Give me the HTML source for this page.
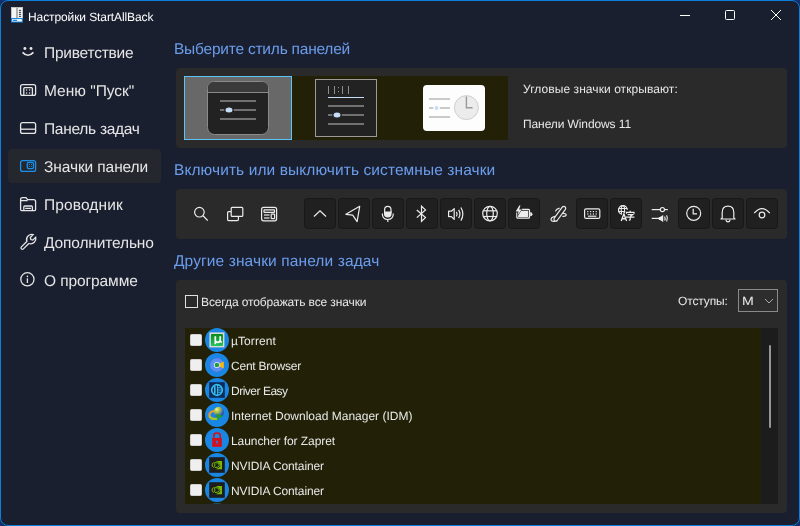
<!DOCTYPE html>
<html><head><meta charset="utf-8">
<style>
*{margin:0;padding:0;box-sizing:border-box}
html,body{width:800px;height:526px;overflow:hidden;background:#123070}
body{font-family:"Liberation Sans",sans-serif;position:relative}
.win{position:absolute;left:0;top:0;width:800px;height:526px;border-radius:8px;background:#1a1f30;overflow:hidden}
.frame{position:absolute;left:0;top:0;width:800px;height:526px;border:1px solid #0b80dd;border-radius:8px}
.t{position:absolute;white-space:nowrap;line-height:1;will-change:transform;text-rendering:geometricPrecision}
.side{color:#e6e6e6;font-size:15.5px}
.hdr{color:#6b9deb;font-size:15.5px}
.sm{color:#e8e8e8;font-size:12px}
.panel{position:absolute;left:176px;width:611px;background:#2a2a2a;border-radius:4px}
svg{position:absolute;overflow:visible}
.btn{position:absolute;top:198px;width:32px;height:31px;background:#202020;border:1px solid #181818;border-radius:3.5px}
</style></head><body>
<div class="win">
  <!-- title bar -->
  <svg style="left:0;top:0" width="800" height="40">
    <rect x="11" y="7.2" width="12" height="11" fill="#f6f6f6"/>
    <rect x="11.6" y="7" width="10.8" height="1" fill="#c4c4c4"/>
    <rect x="11" y="8" width="0.9" height="10" fill="#c0c0c0"/>
    <rect x="22.1" y="8" width="0.9" height="10" fill="#c0c0c0"/>
    <rect x="16.2" y="7.6" width="1.6" height="10.5" fill="#a0a0a0"/>
    <g fill="#505050"><rect x="18.9" y="9.8" width="2.2" height="1.1" rx="0.5"/><rect x="18.9" y="11.8" width="2.2" height="1.1" rx="0.5"/><rect x="18.9" y="13.8" width="2.2" height="1.1" rx="0.5"/><rect x="18.9" y="15.8" width="2.2" height="1.1" rx="0.5"/></g>
    <rect x="11" y="17.9" width="12" height="4.7" rx="0.6" fill="#1a86e0"/>
    <rect x="12.2" y="19.1" width="9.6" height="2.4" fill="#fff"/>
    <rect x="13" y="19.8" width="4.2" height="1.1" rx="0.5" fill="#1a86e0"/>
    <line x1="680" y1="15.5" x2="690" y2="15.5" stroke="#fff" stroke-width="1"/>
    <rect x="725.5" y="10.5" width="9" height="9" rx="1" fill="none" stroke="#fff" stroke-width="1"/>
    <path d="M771 10 L781 20 M781 10 L771 20" stroke="#fff" stroke-width="1"/>
  </svg>
  <div class="t" style="left:28px;top:11px;font-size:12px;color:#fff;letter-spacing:-0.1px">Настройки StartAllBack</div>

  <!-- sidebar -->
  <div style="position:absolute;left:8px;top:149px;width:153px;height:34px;background:#24272e;border-radius:4px"></div>
  <svg style="left:0;top:0" width="170" height="300" fill="none" stroke="#e6e6e6" stroke-width="1.3">
    <circle cx="24.9" cy="48.5" r="1.45" fill="#e6e6e6" stroke="none"/>
    <circle cx="31" cy="48.5" r="1.45" fill="#e6e6e6" stroke="none"/>
    <path d="M22.6 52.4 Q28 58.1 33.4 52.4" stroke-width="1.7"/>
    <rect x="20.6" y="84.6" width="15" height="10.8" rx="2"/>
    <path d="M23.8 95.4 V88.6 Q23.8 87.6 24.8 87.6 H31.4 Q32.4 87.6 32.4 88.6 V95.4"/>
    <g fill="#e6e6e6" stroke="none"><circle cx="26.6" cy="90" r="0.7"/><circle cx="29.6" cy="90" r="0.7"/><circle cx="26.6" cy="93" r="0.7"/><circle cx="29.6" cy="93" r="0.7"/></g>
    <rect x="20.6" y="122.6" width="15" height="10.8" rx="2"/>
    <line x1="20.6" y1="129.2" x2="35.6" y2="129.2"/>
    <g stroke="#1c90ea"><rect x="20.6" y="160.6" width="15" height="10.8" rx="2"/>
    <rect x="27.3" y="162.4" width="6.2" height="6.2" rx="1.3"/></g>
    <g fill="#1c90ea" stroke="none"><circle cx="29.4" cy="164.4" r="0.6"/><circle cx="31.5" cy="164.4" r="0.6"/><circle cx="29.4" cy="166.5" r="0.6"/><circle cx="31.5" cy="166.5" r="0.6"/></g>
    <path d="M20.6 209.6 V199.5 Q20.6 197.6 22.4 197.6 H26 L27.6 199.6 H33.6 Q35.6 199.6 35.6 201.6 V209.6 Q35.6 210.6 34.6 210.6 H21.6 Q20.6 210.6 20.6 209.6 Z"/>
    <line x1="20.6" y1="200.6" x2="27.6" y2="200.6"/>
    <path d="M23.8 210.6 V207 Q23.8 206 24.8 206 H31.4 Q32.4 206 32.4 207 V210.6"/>
    <line x1="25.2" y1="208.4" x2="31" y2="208.4"/>
    <path transform="translate(-0.2 0.7)" d="M21.6 246.2 L27 240.8 Q26 237.5 28.3 235.2 Q30.5 233.2 33.3 233.9 L30.5 236.8 L31 238.8 L33 239.4 L35.9 236.6 Q36.6 239.5 34.5 241.6 Q32.3 243.9 29 242.8 L23.6 248.2 Q22.6 249.2 21.6 248.2 Q20.6 247.2 21.6 246.2 Z"/>
    <circle cx="27.4" cy="279.3" r="6.6"/>
    <circle cx="27.4" cy="276.4" r="0.8" fill="#e6e6e6" stroke="none"/>
    <line x1="27.4" y1="278.3" x2="27.4" y2="283"/>
  </svg>
  <div class="t side" style="left:44px;top:46px;letter-spacing:-0.22px">Приветствие</div>
  <div class="t side" style="left:44px;top:84px;letter-spacing:-0.01px">Меню "Пуск"</div>
  <div class="t side" style="left:44px;top:122px;letter-spacing:-0.28px">Панель задач</div>
  <div class="t side" style="left:44px;top:160px;letter-spacing:-0.1px">Значки панели</div>
  <div class="t side" style="left:43.5px;top:198px;letter-spacing:0.12px">Проводник</div>
  <div class="t side" style="left:44px;top:236px;letter-spacing:-0.14px">Дополнительно</div>
  <div class="t side" style="left:44px;top:274px;letter-spacing:-0.1px">О программе</div>

  <!-- headers -->
  <div class="t hdr" style="left:174px;top:42px;letter-spacing:-0.22px">Выберите стиль панелей</div>
  <div class="t hdr" style="left:174px;top:163px;letter-spacing:0.09px">Включить или выключить системные значки</div>
  <div class="t hdr" style="left:174px;top:254px;letter-spacing:0.11px">Другие значки панели задач</div>

  <!-- panel 1 -->
  <div class="panel" style="top:68px;height:80px"></div>
  <div style="position:absolute;left:184px;top:76px;width:324px;height:64px;background:#222006"></div>
  <div style="position:absolute;left:184px;top:76px;width:108px;height:64px;background:#686868;border:1px solid #5ec4f5"></div>
  <svg style="left:0;top:0" width="800" height="160">
    <rect x="207.5" y="81.5" width="61" height="53" rx="7" fill="#222" stroke="#8a8a8a"/>
    <path d="M208 92.5 V88.5 Q208 82 214.5 82 H261.5 Q268 82 268 88.5 V92.5 Z" fill="#3a3a3a"/>
    <line x1="208" y1="92.5" x2="268" y2="92.5" stroke="#8a8a8a"/>
    <g stroke="#8c8c8c" stroke-width="1.6"><line x1="220" y1="101" x2="256" y2="101"/><line x1="220" y1="110" x2="256" y2="110"/><line x1="220" y1="119" x2="256" y2="119"/></g>
    <ellipse cx="229" cy="110" rx="4.2" ry="3.2" fill="#c7ddf7" stroke="#222" stroke-width="1.4"/>
    <rect x="315.5" y="79.5" width="61" height="57" fill="#222" stroke="#9a9a9a"/>
    <g stroke="#8c8c8c" stroke-width="1"><line x1="328.5" y1="86" x2="328.5" y2="94"/><line x1="334.5" y1="86" x2="334.5" y2="94"/><line x1="342.5" y1="86" x2="342.5" y2="94"/><line x1="348.5" y1="86" x2="348.5" y2="94"/></g>
    <g fill="#8c8c8c"><rect x="338" y="87" width="1" height="1.2"/><rect x="338" y="91" width="1" height="1.2"/></g>
    <line x1="328" y1="97.5" x2="364" y2="97.5" stroke="#c7ddf7" stroke-width="1.2"/>
    <g stroke="#8c8c8c" stroke-width="1.6"><line x1="328" y1="106" x2="364" y2="106"/><line x1="328" y1="115" x2="364" y2="115"/><line x1="328" y1="124" x2="364" y2="124"/></g>
    <ellipse cx="337" cy="115" rx="4.2" ry="3.2" fill="#c7ddf7" stroke="#222" stroke-width="1.4"/>
    <rect x="423" y="85" width="62" height="46" rx="4" fill="#fdfdfd"/>
    <g stroke="#bdbdbd" stroke-width="1.6"><line x1="429" y1="99" x2="450" y2="99"/><line x1="429" y1="108" x2="450" y2="108"/><line x1="429" y1="117" x2="450" y2="117"/></g>
    <circle cx="436.5" cy="108" r="2.6" fill="#c7ddf7" stroke="#fdfdfd" stroke-width="1.4"/>
    <circle cx="466.4" cy="107.6" r="12" fill="#ececec" stroke="#cfcfcf"/>
    <path d="M466.4 96.5 V107.8 H472.5" fill="none" stroke="#9a9a9a" stroke-width="1.4"/>
  </svg>
  <div class="t sm" style="left:523.0px;top:83px;letter-spacing:0.07px">Угловые значки открывают:</div>
  <div class="t sm" style="left:523px;top:118px;letter-spacing:-0.10px">Панели Windows 11</div>

  <!-- panel 2 -->
  <div class="panel" style="top:189px;height:50px"></div>
  <div class="btn" style="left:304px"></div>
  <div class="btn" style="left:338px"></div>
  <div class="btn" style="left:372px"></div>
  <div class="btn" style="left:406px"></div>
  <div class="btn" style="left:440px"></div>
  <div class="btn" style="left:474px"></div>
  <div class="btn" style="left:508px"></div>
  <div class="btn" style="left:576px"></div>
  <div class="btn" style="left:610px"></div>
  <div class="btn" style="left:678px"></div>
  <div class="btn" style="left:712px"></div>
  <div class="btn" style="left:746px"></div>
  <svg style="left:0;top:0" width="800" height="240" fill="none" stroke="#ececec" stroke-width="1.2">
    <circle cx="199.4" cy="212.2" r="4.8"/>
    <line x1="203" y1="215.8" x2="207.8" y2="220.6" stroke-width="1.3"/>
    <path d="M231.2 211.6 H228.6 Q227.6 211.6 227.6 212.6 V219.6 Q227.6 220.6 228.6 220.6 H237.4 Q238.4 220.6 238.4 219.6 V216.4"/>
    <rect x="231.2" y="207.4" width="11.6" height="9" rx="1"/>
    <rect x="261.6" y="207.4" width="15" height="13.4" rx="2"/>
    <rect x="264" y="209.8" width="10.5" height="2.6" rx="0.5"/>
    <line x1="264" y1="215" x2="269.5" y2="215"/><line x1="264" y1="218" x2="269.5" y2="218"/>
    <rect x="271.2" y="214.2" width="3.4" height="4.4" rx="0.5"/>
    <path d="M314 216.5 L320 210.8 L326 216.5"/>
    <path d="M359.7 206.3 L345.9 214.3 L352.7 215.2 L357.1 221.6 Z" stroke-linejoin="round"/>
    <path d="M384.6 213 V209.5 Q384.6 206.3 387.8 206.3 Q391 206.3 391 209.5 V213" />
    <path d="M384.6 212 H391 V213.8 Q391 217 387.8 217 Q384.6 217 384.6 213.8 Z" fill="#ececec"/>
    <path d="M382.3 213.5 Q382.3 219.5 387.8 219.5 Q393.3 219.5 393.3 213.5"/>
    <line x1="387.8" y1="219.5" x2="387.8" y2="222"/>
    <path d="M416.8 210 L425.5 217.6 L421.5 221.3 V206.2 L425.5 209.9 L416.8 217.6"/>
    <path d="M448.6 211.2 H451.4 L454.2 208.6 V219.4 L451.4 216.6 H448.6 Z" stroke-linejoin="round"/>
    <path d="M456.4 211.8 Q457.9 214 456.4 216.4"/>
    <path d="M458.6 209.9 Q461.3 214 458.6 218.1"/>
    <path d="M460.9 207.5 Q464.8 214 460.9 220.6"/>
    <circle cx="490" cy="213.6" r="7.3"/>
    <ellipse cx="490" cy="213.6" rx="3.3" ry="7.3"/>
    <line x1="483.2" y1="210.8" x2="496.8" y2="210.8"/><line x1="483.2" y1="216.5" x2="496.8" y2="216.5"/>
    <path d="M521.6 209.4 H528.5 Q529.5 209.4 529.5 210.4 V217.2 Q529.5 218.2 528.5 218.2 H517.8 Q516.8 218.2 516.8 217.2 V212.4"/>
    <path d="M520.8 210.8 H528.2 V216.9 H518.1 V215.4 Z" fill="#ececec" stroke="none"/>
    <path d="M530.2 212.1 Q532.5 212.3 532.5 214.2 Q532.5 216.1 530.2 216.3 Z" fill="#ececec" stroke="none"/>
    <path d="M519.3 205.5 L515.7 211.4 H518.6 L517.5 215.2 L521.9 209.6 H519.1 L520.5 205.5 Z" fill="#ececec" stroke="#202020" stroke-width="0.9" paint-order="stroke" stroke-linejoin="round"/>
    <path d="M554.2 218.1 L562.4 207.0 Q563.6 205.7 565.0 206.7 Q566.4 207.9 565.4 209.4 L557.2 220.5 Q556.2 221.7 554.8 220.9 Q553.4 219.8 554.2 218.1 Z"/>
    <path d="M555.3 211.4 Q556.4 208.6 559.6 208.1"/>
    <path d="M554.9 216.3 Q550.8 217.2 551 219.8 Q551.6 221.8 555.2 221.2"/>
    <path d="M562.6 213.4 Q566.3 213.2 566.2 215.0 Q566 216.6 562.4 216.3"/>
    <rect x="584.6" y="208.8" width="15.2" height="9.6" rx="1.5"/>
    <g fill="#ececec" stroke="none"><rect x="587.2" y="211" width="1.2" height="1.2"/><rect x="590" y="211" width="1.2" height="1.2"/><rect x="592.8" y="211" width="1.2" height="1.2"/><rect x="595.6" y="211" width="1.2" height="1.2"/><rect x="587.2" y="213.4" width="1.2" height="1.2"/><rect x="590" y="213.4" width="1.2" height="1.2"/><rect x="592.8" y="213.4" width="1.2" height="1.2"/><rect x="595.6" y="213.4" width="1.2" height="1.2"/></g>
    <line x1="588" y1="216.2" x2="596.4" y2="216.2"/>
    <circle cx="622.9" cy="210" r="4.4" stroke-width="1.25"/>
    <ellipse cx="622.9" cy="210" rx="1.7" ry="4.4" stroke-width="1.1"/>
    <path d="M618.6 208.5 H627.2 M618.6 211.5 H627.2" stroke-width="1.1"/>
    <path d="M619.2 222.5 L622.4 213.0 H625.2 L625.4 209.8 H635.5 V221.5 H628.2 Z" fill="#202020" stroke="none"/>
    <path d="M621.2 220.9 L623.9 213.9 L626.6 220.9 M622.2 218.7 H625.6" stroke-width="1.35"/>
    <path d="M626.5 213.8 V212.3 H634 V213.8 M630.2 210.8 V212.3 M627.6 214.5 H632.7 L630.2 216.5 M626 217.1 H634.4 M630.2 216.5 V219.5 Q630.2 220.3 628.9 220.1" stroke-width="1.25"/>
    <line x1="651.7" y1="209.6" x2="660.2" y2="209.6"/><line x1="664.6" y1="209.6" x2="667.8" y2="209.6"/>
    <circle cx="662.4" cy="209.6" r="2.1"/>
    <line x1="651.7" y1="218.4" x2="659" y2="218.4"/>
    <path d="M658.8 216.9 H660 L663.2 214.9 V221.9 L660 219.9 H658.8 Z" fill="#ececec" stroke="none"/>
    <path d="M664.6 216.4 Q665.7 218.4 664.6 220.4" stroke-width="1.1"/>
    <path d="M666.6 215.2 Q668.3 218.4 666.6 221.6" stroke-width="1.1"/>
    <circle cx="693.7" cy="213.3" r="7"/>
    <path d="M693.2 208.8 V213.8 H697"/>
    <path d="M722.2 217.8 V212.5 Q722.2 206.2 728 206.2 Q733.8 206.2 733.8 212.5 V217.8 L735 219 H721 Z" stroke-linejoin="round"/>
    <path d="M725.8 219.6 Q726.2 221.8 728 221.8 Q729.8 221.8 730.2 219.6"/>
    <path d="M754.2 213.2 Q762 204.2 769.8 213.2"/>
    <circle cx="762" cy="215" r="2.8"/>
  </svg>
    
  <!-- panel 3 -->
  <div class="panel" style="top:280px;height:233px"></div>
  <div style="position:absolute;left:185px;top:295px;width:13px;height:13px;border:1px solid #e0e0e0"></div>
  <div class="t sm" style="left:201px;top:296px;letter-spacing:-0.12px">Всегда отображать все значки</div>
  <div class="t sm" style="left:678px;top:295px;letter-spacing:-0.14px">Отступы:</div>
  <div style="position:absolute;left:738px;top:289px;width:40px;height:23px;border:1px solid #8a8a8a;background:#2d2d2d"></div>
  <div class="t sm" style="left:742px;top:295px;transform:scaleX(1.18);transform-origin:0 0">M</div>
  <svg style="left:0;top:0" width="800" height="320"><path d="M765 299 L769 303 L773 299" fill="none" stroke="#aaa" stroke-width="1"/></svg>

  <div style="position:absolute;left:185px;top:328px;width:576px;height:175.5px;background:#222006;overflow:hidden" id="list"></div>
<svg style="left:0;top:0" width="800" height="526"><defs><clipPath id="lc"><rect x="185" y="328" width="576" height="175.5"/></clipPath><linearGradient id="ug" x1="0" y1="0" x2="0" y2="1"><stop offset="0" stop-color="#0a8a1e"/><stop offset="1" stop-color="#22c55a"/></linearGradient></defs><g clip-path="url(#lc)">
<rect x="190.5" y="334.5" width="11" height="11" rx="1" fill="#efefef" stroke="#cfcfcf" stroke-width="1"/>
<circle cx="217" cy="340" r="12" fill="#1a86e3"/>
<rect x="190.5" y="359.5" width="11" height="11" rx="1" fill="#efefef" stroke="#cfcfcf" stroke-width="1"/>
<circle cx="217" cy="365" r="12" fill="#1a86e3"/>
<rect x="190.5" y="384.5" width="11" height="11" rx="1" fill="#efefef" stroke="#cfcfcf" stroke-width="1"/>
<circle cx="217" cy="390" r="12" fill="#1a86e3"/>
<rect x="190.5" y="409.5" width="11" height="11" rx="1" fill="#efefef" stroke="#cfcfcf" stroke-width="1"/>
<circle cx="217" cy="415" r="12" fill="#1a86e3"/>
<rect x="190.5" y="434.5" width="11" height="11" rx="1" fill="#efefef" stroke="#cfcfcf" stroke-width="1"/>
<circle cx="217" cy="440" r="12" fill="#1a86e3"/>
<rect x="190.5" y="459.5" width="11" height="11" rx="1" fill="#efefef" stroke="#cfcfcf" stroke-width="1"/>
<circle cx="217" cy="465" r="12" fill="#1a86e3"/>
<rect x="190.5" y="484.5" width="11" height="11" rx="1" fill="#efefef" stroke="#cfcfcf" stroke-width="1"/>
<circle cx="217" cy="490" r="12" fill="#1a86e3"/>
<rect x="190.5" y="509.5" width="11" height="11" rx="1" fill="#efefef" stroke="#cfcfcf" stroke-width="1"/>
<circle cx="217" cy="515" r="12" fill="#1a86e3"/>
<rect x="209.4" y="332.4" width="15" height="15" fill="#d9d9d9"/><rect x="210.9" y="333.9" width="12.1" height="12.1" rx="1" fill="url(#ug)"/>
<path d="M215.3 336.3 V344.3 M215.3 340.4 Q215.5 342.3 217.7 342.3 Q220.2 342.3 220.2 340 M220.2 336.3 V340.8 Q220.3 342 221.8 341.8" fill="none" stroke="#fff" stroke-width="1.7"/>
<circle cx="216.9" cy="365" r="7.2" fill="#5d8ff2" stroke="#2f6fd8" stroke-width="0.6"/><path d="M219.5 363.4 L223.8 361.6 V368.4 L219.5 366.6 Z" fill="#f7b90c"/><circle cx="216.9" cy="365" r="3" fill="#e8f0ff"/><circle cx="216.9" cy="365" r="2.3" fill="#1f9a47"/>
<rect x="209.2" y="382.2" width="15.6" height="15.6" fill="#0c2b58"/><circle cx="217" cy="390" r="5.3" fill="none" stroke="#33bdf0" stroke-width="1.7"/><rect x="214" y="386.2" width="1.6" height="7.6" fill="#33bdf0"/><path d="M217.6 385 V395 M217.6 387.8 H221 M217.6 390 H221.5 M217.6 392.2 H221" stroke="#33bdf0" stroke-width="1"/>
<defs><radialGradient id="gl" cx="0.3" cy="0.25" r="0.85"><stop offset="0" stop-color="#f6f28a"/><stop offset="0.35" stop-color="#a8c040"/><stop offset="0.7" stop-color="#3a70c0"/><stop offset="1" stop-color="#1a3a80"/></radialGradient></defs>
<path d="M214 411 Q208.5 412 209.5 416.5 Q211 420 218 418.5" fill="none" stroke="#f29a2a" stroke-width="2.2"/><path d="M210 416 Q211 420 218 419" fill="none" stroke="#9acb2a" stroke-width="1.8"/>
<circle cx="218.8" cy="412" r="5.2" fill="url(#gl)"/><path d="M216 414 L224 416 L219.5 417.5 L217.5 421 Z" fill="#1fa02a"/>
<path d="M213.8 438 V435.5 Q213.8 433 217 433 Q220.2 433 220.2 435.5 V438" fill="none" stroke="#d4101c" stroke-width="1.6"/><rect x="212.2" y="438" width="9.6" height="8.8" fill="#d4101c"/><path d="M216.2 440.8 H217.8 V444 H216.6 V442 H215.6 Z" fill="#1a86e3"/>
<rect x="209.2" y="457.2" width="15.6" height="15.6" fill="#1d1d1d"/><path d="M215.5 461 H222 V469.2 H215.5 Q219.5 468 220.5 466 Q219 462 215.5 461 Z" fill="#76b900"/><ellipse cx="213.5" cy="465" rx="1.4" ry="2.2" fill="none" stroke="#76b900" stroke-width="1"/><path d="M214.5 462.5 Q218.5 462 219.5 465.2 Q218.5 468 215 467.5" fill="none" stroke="#76b900" stroke-width="1"/>
<rect x="209.2" y="482.2" width="15.6" height="15.6" fill="#1d1d1d"/><path d="M215.5 486 H222 V494.2 H215.5 Q219.5 493 220.5 491 Q219 487 215.5 486 Z" fill="#76b900"/><ellipse cx="213.5" cy="490" rx="1.4" ry="2.2" fill="none" stroke="#76b900" stroke-width="1"/><path d="M214.5 487.5 Q218.5 487 219.5 490.2 Q218.5 493 215 492.5" fill="none" stroke="#76b900" stroke-width="1"/>
<rect x="209.2" y="507.2" width="15.6" height="15.6" fill="#1d1d1d"/><path d="M215.5 511 H222 V519.2 H215.5 Q219.5 518 220.5 516 Q219 512 215.5 511 Z" fill="#76b900"/><ellipse cx="213.5" cy="515" rx="1.4" ry="2.2" fill="none" stroke="#76b900" stroke-width="1"/><path d="M214.5 512.5 Q218.5 512 219.5 515.2 Q218.5 518 215 517.5" fill="none" stroke="#76b900" stroke-width="1"/>
</g></svg>
<div class="t sm" style="left:231px;top:335px;letter-spacing:0.09px">µTorrent</div>
<div class="t sm" style="left:231px;top:360px;letter-spacing:-0.23px">Cent Browser</div>
<div class="t sm" style="left:231px;top:385px;letter-spacing:-0.49px">Driver Easy</div>
<div class="t sm" style="left:231px;top:410px;letter-spacing:0px">Internet Download Manager (IDM)</div>
<div class="t sm" style="left:231px;top:435px;letter-spacing:-0.07px">Launcher for Zapret</div>
<div class="t sm" style="left:231px;top:460px;letter-spacing:-0.11px">NVIDIA Container</div>
<div class="t sm" style="left:231px;top:485px;letter-spacing:-0.11px">NVIDIA Container</div>
  <div style="position:absolute;left:761px;top:328px;width:17px;height:175.5px;background:#1c1c1c"></div>
  <div style="position:absolute;left:769px;top:345px;width:2px;height:83px;background:#959595;border-radius:1px"></div>
</div>
<div class="frame"></div>
</body></html>
